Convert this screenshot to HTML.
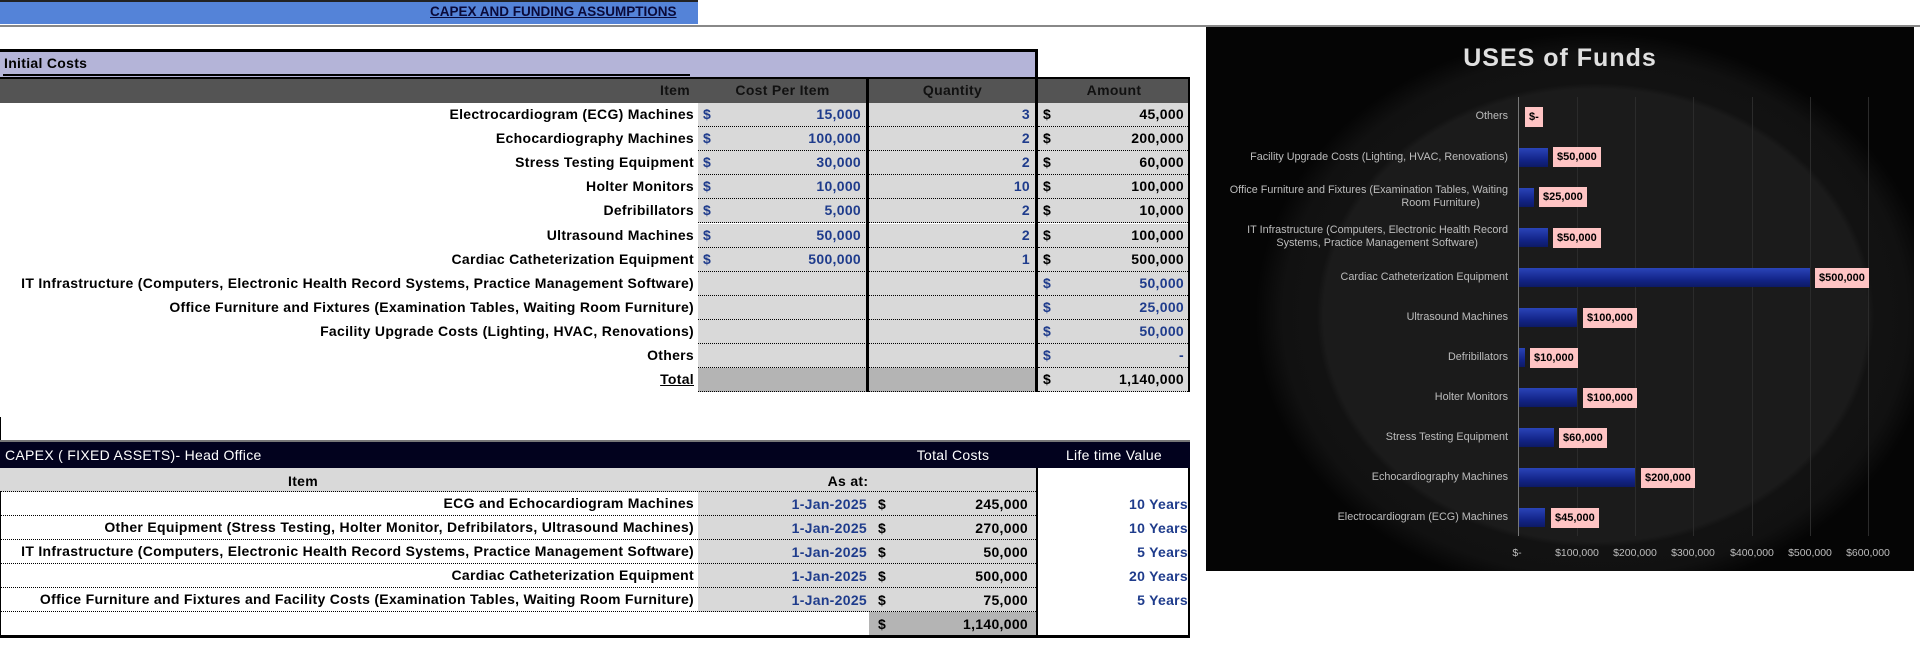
<!DOCTYPE html>
<html><head><meta charset="utf-8"><style>
*{margin:0;padding:0;box-sizing:border-box}
body{width:1920px;height:659px;background:#fff;position:relative;overflow:hidden;font-family:"Liberation Sans",sans-serif;font-weight:bold;font-size:14px;letter-spacing:0.3px;color:#000}
.a{position:absolute}
.r{position:absolute;left:0;height:24px;line-height:23px;width:1190px}
.lbl{position:absolute;right:calc(1190px - 694px);white-space:nowrap;text-align:right}
.c1{position:absolute;left:698px;width:169px;height:24px;background:#d9d9d9;border-bottom:1px dotted #000}
.c2{position:absolute;left:869px;width:167px;height:24px;background:#d9d9d9;border-bottom:1px dotted #000}
.c3{position:absolute;left:1038px;width:152px;height:24px;background:#d9d9d9;border-bottom:1px dotted #000}
.bl{color:#1f3c8c}
.d{position:absolute;left:5px}
.n{position:absolute;right:6px}
.vb{position:absolute;width:3px;background:#000}
.cl{position:absolute;font-family:"Liberation Sans",sans-serif;font-weight:normal;font-size:10.8px;letter-spacing:0;color:#bdbdbd;text-align:right;line-height:13px}
.bar{position:absolute;left:1519px;height:19px;background:linear-gradient(#2a44b8,#13258a 60%,#0d1a66)}
.pk{position:absolute;height:20px;line-height:20px;background:#ffc4c4;color:#000;font-size:11px;letter-spacing:0;font-weight:bold;padding:0 4px}
.xl{position:absolute;top:547px;font-size:10.5px;letter-spacing:0;font-weight:normal;color:#bdbdbd;width:70px;text-align:center}
.g{position:absolute;top:97px;height:439px;width:1px;background:#2b2b2b}
</style></head><body>
<div class="a" style="left:0;top:0;width:698px;height:24px;background:#5483d8;border-top:2px solid #222"></div>
<div class="a" style="left:0;top:25px;width:1920px;height:2px;background:#888"></div>
<div class="a" style="left:430px;top:4px;font-size:13.5px;letter-spacing:0;color:#0a0a3a;text-decoration:underline">CAPEX AND FUNDING ASSUMPTIONS</div>

<div class="a" style="left:0;top:49px;width:1038px;height:28px;background:#b4b4d8;border-top:3px solid #000;border-right:3px solid #000"></div>
<div class="a" style="left:4px;top:55px;font-size:14px">Initial Costs</div>
<div class="a" style="left:3px;top:74px;width:687px;height:2px;background:#000"></div>
<div class="a" style="left:0;top:77px;width:1190px;height:26px;background:#545454;border-top:2px solid #000;border-right:2px solid #000"></div>
<div class="a" style="left:660px;top:82px;color:#111">Item</div>
<div class="a" style="left:698px;width:169px;top:82px;text-align:center;color:#111">Cost Per Item</div>
<div class="a" style="left:869px;width:167px;top:82px;text-align:center;color:#111">Quantity</div>
<div class="a" style="left:1038px;width:152px;top:82px;text-align:center;color:#111">Amount</div>

<div class="r" style="top:103px"><span class="lbl">Electrocardiogram (ECG) Machines</span><div class="c1 bl"><span class="d">$</span><span class="n">15,000</span></div><div class="c2 bl"><span class="n">3</span></div><div class="c3"><span class="d">$</span><span class="n">45,000</span></div></div>
<div class="r" style="top:127px"><span class="lbl">Echocardiography Machines</span><div class="c1 bl"><span class="d">$</span><span class="n">100,000</span></div><div class="c2 bl"><span class="n">2</span></div><div class="c3"><span class="d">$</span><span class="n">200,000</span></div></div>
<div class="r" style="top:151px"><span class="lbl">Stress Testing Equipment</span><div class="c1 bl"><span class="d">$</span><span class="n">30,000</span></div><div class="c2 bl"><span class="n">2</span></div><div class="c3"><span class="d">$</span><span class="n">60,000</span></div></div>
<div class="r" style="top:175px"><span class="lbl">Holter Monitors</span><div class="c1 bl"><span class="d">$</span><span class="n">10,000</span></div><div class="c2 bl"><span class="n">10</span></div><div class="c3"><span class="d">$</span><span class="n">100,000</span></div></div>
<div class="r" style="top:199px"><span class="lbl">Defribillators</span><div class="c1 bl"><span class="d">$</span><span class="n">5,000</span></div><div class="c2 bl"><span class="n">2</span></div><div class="c3"><span class="d">$</span><span class="n">10,000</span></div></div>
<div class="r" style="top:224px"><span class="lbl">Ultrasound Machines</span><div class="c1 bl"><span class="d">$</span><span class="n">50,000</span></div><div class="c2 bl"><span class="n">2</span></div><div class="c3"><span class="d">$</span><span class="n">100,000</span></div></div>
<div class="r" style="top:248px"><span class="lbl">Cardiac Catheterization Equipment</span><div class="c1 bl"><span class="d">$</span><span class="n">500,000</span></div><div class="c2 bl"><span class="n">1</span></div><div class="c3"><span class="d">$</span><span class="n">500,000</span></div></div>
<div class="r" style="top:272px"><span class="lbl">IT Infrastructure (Computers, Electronic Health Record Systems, Practice Management Software)</span><div class="c1"></div><div class="c2"></div><div class="c3 bl"><span class="d">$</span><span class="n">50,000</span></div></div>
<div class="r" style="top:296px"><span class="lbl">Office Furniture and Fixtures (Examination Tables, Waiting Room Furniture)</span><div class="c1"></div><div class="c2"></div><div class="c3 bl"><span class="d">$</span><span class="n">25,000</span></div></div>
<div class="r" style="top:320px"><span class="lbl">Facility Upgrade Costs (Lighting, HVAC, Renovations)</span><div class="c1"></div><div class="c2"></div><div class="c3 bl"><span class="d">$</span><span class="n">50,000</span></div></div>
<div class="r" style="top:344px"><span class="lbl">Others</span><div class="c1"></div><div class="c2"></div><div class="c3 bl"><span class="d">$</span><span class="n">-</span></div></div>
<div class="r" style="top:368px"><span class="lbl" style="text-decoration:underline">Total</span><div class="c1" style="background:#b4b4b4"></div><div class="c2" style="background:#b4b4b4"></div><div class="c3"><span class="d">$</span><span class="n">1,140,000</span></div></div>
<div class="vb" style="left:866px;top:77px;height:315px"></div>
<div class="vb" style="left:1035px;top:49px;height:343px"></div>
<div class="vb" style="left:1188px;top:77px;height:315px;width:2px"></div>

<div class="a" style="left:0;top:417px;width:1px;height:220px;background:#000"></div>
<div class="a" style="left:0;top:440px;width:1190px;height:28px;background:#02021e;border-top:2px solid #777"></div>
<div class="a" style="left:5px;top:447px;color:#fff;font-weight:normal">CAPEX ( FIXED ASSETS)- Head Office</div>
<div class="a" style="left:900px;width:106px;top:447px;color:#fff;font-weight:normal;text-align:center">Total Costs</div>
<div class="a" style="left:1038px;width:152px;top:447px;color:#fff;font-weight:normal;text-align:center">Life time Value</div>
<div class="a" style="left:0;top:468px;width:1036px;height:24px;background:#d9d9d9;border-bottom:1px dotted #000"></div>
<div class="a" style="left:0;width:606px;top:473px;text-align:center">Item</div>
<div class="a" style="left:800px;width:96px;top:473px;text-align:center">As at:</div>

<div class="r" style="top:492px"><span class="lbl">ECG and Echocardiogram Machines</span></div>
<div class="r" style="top:516px"><span class="lbl">Other Equipment (Stress Testing, Holter Monitor, Defribilators, Ultrasound Machines)</span></div>
<div class="r" style="top:540px"><span class="lbl">IT Infrastructure (Computers, Electronic Health Record Systems, Practice Management Software)</span></div>
<div class="r" style="top:564px"><span class="lbl">Cardiac Catheterization Equipment</span></div>
<div class="r" style="top:588px"><span class="lbl">Office Furniture and Fixtures and Facility Costs (Examination Tables, Waiting Room Furniture)</span></div>
<div class="a" style="left:698px;top:492px;width:338px;height:120px;background:#d9d9d9"></div>
<div class="a" style="left:0;top:515px;width:1036px;border-top:1px dotted #000"></div>
<div class="a" style="left:0;top:539px;width:1036px;border-top:1px dotted #000"></div>
<div class="a" style="left:0;top:563px;width:1036px;border-top:1px dotted #000"></div>
<div class="a" style="left:0;top:587px;width:1036px;border-top:1px dotted #000"></div>
<div class="a" style="left:0;top:611px;width:1036px;border-top:1px dotted #000"></div>
<div class="a bl" style="left:750px;width:117px;top:492px;line-height:24px;text-align:right">1-Jan-2025<br>1-Jan-2025<br>1-Jan-2025<br>1-Jan-2025<br>1-Jan-2025</div>
<div class="a" style="left:878px;top:492px;line-height:24px">$<br>$<br>$<br>$<br>$</div>
<div class="a" style="left:920px;width:108px;top:492px;line-height:24px;text-align:right">245,000<br>270,000<br>50,000<br>500,000<br>75,000</div>
<div class="a bl" style="left:1070px;width:118px;top:492px;line-height:24px;text-align:right">10 Years<br>10 Years<br>5 Years<br>20 Years<br>5 Years</div>
<div class="a" style="left:869px;top:612px;width:167px;height:24px;background:#b4b4b4"></div>
<div class="a" style="left:878px;top:612px;line-height:24px">$</div>
<div class="a" style="left:920px;width:108px;top:612px;line-height:24px;text-align:right">1,140,000</div>
<div class="a" style="left:0;top:635px;width:1190px;height:3px;background:#000"></div>
<div class="a" style="left:1036px;top:468px;width:2px;height:168px;background:#000"></div>
<div class="a" style="left:1188px;top:468px;width:2px;height:168px;background:#000"></div>

<div class="a" style="left:1206px;top:27px;width:708px;height:544px;background:radial-gradient(ellipse 48% 52% at 55% 53%,#1b1b1b 0,#1b1b1b 80%,#121212 82%,#111 92%,#050505 100%);overflow:hidden"></div>
<div class="a" style="left:1206px;top:44px;width:708px;text-align:center;font-size:25px;color:#e0e0e0;font-weight:bold;letter-spacing:1px">USES of Funds</div>
<div class="g" style="left:1577px"></div><div class="g" style="left:1635px"></div><div class="g" style="left:1693px"></div><div class="g" style="left:1752px"></div><div class="g" style="left:1810px"></div><div class="g" style="left:1868px"></div>
<div class="a" style="left:1518px;top:97px;width:1px;height:439px;background:#777"></div>

<div class="cl" style="right:412px;top:110px">Others</div>
<div class="cl" style="right:412px;top:151px">Facility Upgrade Costs (Lighting, HVAC, Renovations)</div>
<div class="cl" style="right:412px;top:184px">Office Furniture and Fixtures (Examination Tables, Waiting<br><span style="margin-right:28px">Room Furniture)</span></div>
<div class="cl" style="right:412px;top:224px">IT Infrastructure (Computers, Electronic Health Record<br><span style="margin-right:30px">Systems, Practice Management Software)</span></div>
<div class="cl" style="right:412px;top:271px">Cardiac Catheterization Equipment</div>
<div class="cl" style="right:412px;top:311px">Ultrasound Machines</div>
<div class="cl" style="right:412px;top:351px">Defribillators</div>
<div class="cl" style="right:412px;top:391px">Holter Monitors</div>
<div class="cl" style="right:412px;top:431px">Stress Testing Equipment</div>
<div class="cl" style="right:412px;top:471px">Echocardiography Machines</div>
<div class="cl" style="right:412px;top:511px">Electrocardiogram (ECG) Machines</div>

<div class="pk" style="left:1525px;top:107px">$-</div>
<div class="bar" style="top:148px;width:29px"></div><div class="pk" style="left:1553px;top:147px">$50,000</div>
<div class="bar" style="top:188px;width:15px"></div><div class="pk" style="left:1539px;top:187px">$25,000</div>
<div class="bar" style="top:228px;width:29px"></div><div class="pk" style="left:1553px;top:228px">$50,000</div>
<div class="bar" style="top:268px;width:291px"></div><div class="pk" style="left:1815px;top:268px">$500,000</div>
<div class="bar" style="top:308px;width:58px"></div><div class="pk" style="left:1583px;top:308px">$100,000</div>
<div class="bar" style="top:348px;width:6px"></div><div class="pk" style="left:1530px;top:348px">$10,000</div>
<div class="bar" style="top:388px;width:58px"></div><div class="pk" style="left:1583px;top:388px">$100,000</div>
<div class="bar" style="top:428px;width:35px"></div><div class="pk" style="left:1559px;top:428px">$60,000</div>
<div class="bar" style="top:468px;width:116px"></div><div class="pk" style="left:1641px;top:468px">$200,000</div>
<div class="bar" style="top:508px;width:26px"></div><div class="pk" style="left:1551px;top:508px">$45,000</div>

<div class="xl" style="left:1482px">$-</div>
<div class="xl" style="left:1542px">$100,000</div>
<div class="xl" style="left:1600px">$200,000</div>
<div class="xl" style="left:1658px">$300,000</div>
<div class="xl" style="left:1717px">$400,000</div>
<div class="xl" style="left:1775px">$500,000</div>
<div class="xl" style="left:1833px">$600,000</div>
</body></html>
